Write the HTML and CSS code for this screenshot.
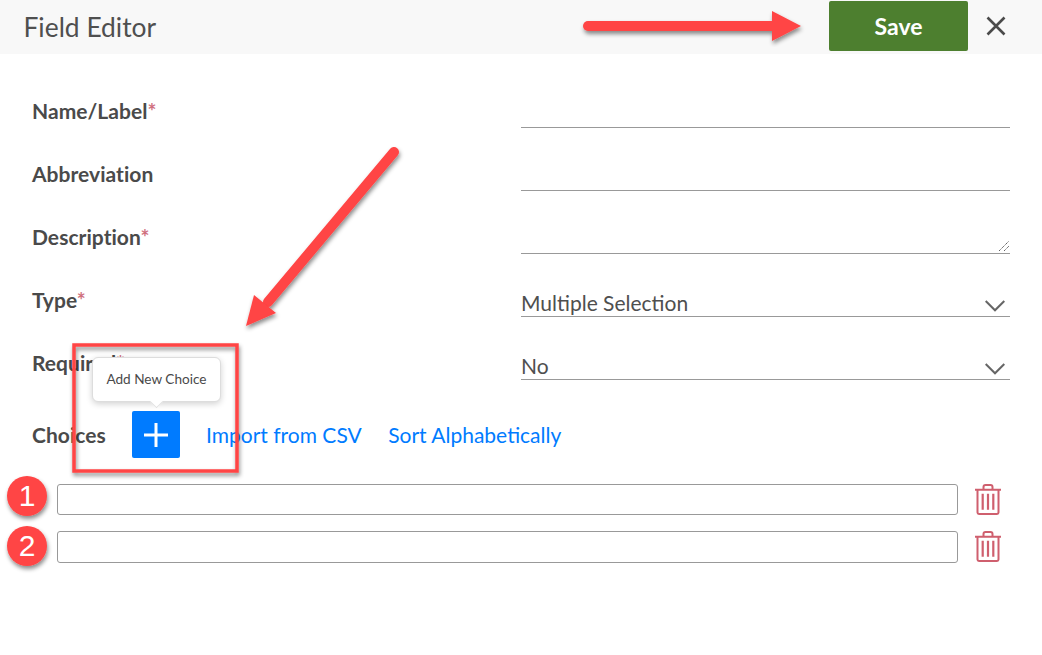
FILE: index.html
```html
<!DOCTYPE html>
<html lang="en">
<head>
<meta charset="utf-8">
<title>Field Editor</title>
<link rel="stylesheet" href="styles.css">
</head>
<body>
<div class="page">
  <header class="header">
    <h1 class="title">Field Editor</h1>
    <button class="save" type="button">Save</button>
    <button class="close" type="button" aria-label="Close">
      <svg width="20" height="20" viewBox="0 0 20 20"><path d="M1.5 1.5 18.500 18.500M18.500 1.500 1.500 18.500" fill="none" stroke="#4a4a4a" stroke-width="2.600"/></svg>
    </button>
  </header>
  <main class="form">
    <div class="row"><label class="label">Name/Label<span class="req">*</span></label><div class="field"></div></div>
    <div class="row"><label class="label">Abbreviation</label><div class="field"></div></div>
    <div class="row"><label class="label">Description<span class="req">*</span></label>
      <div class="field">
        <svg class="grip" width="10" height="10" viewBox="0 0 10 10"><path d="M0 10 10 0M5 10 10 5" fill="none" stroke="#555" stroke-width="1" stroke-dasharray="1.300 .7"/></svg>
      </div>
    </div>
    <div class="row"><label class="label">Type<span class="req">*</span></label>
      <div class="field select"><span>Multiple Selection</span>
        <svg class="chev" width="20" height="12" viewBox="0 0 20 12"><path d="M.7 1 10 10.300 19.300 1" fill="none" stroke="#666" stroke-width="2"/></svg>
      </div>
    </div>
    <div class="row"><label class="label">Required<span class="req">*</span></label>
      <div class="field select"><span>No</span>
        <svg class="chev" width="20" height="12" viewBox="0 0 20 12"><path d="M.7 1 10 10.300 19.300 1" fill="none" stroke="#666" stroke-width="2"/></svg>
      </div>
    </div>
    <div class="choices-bar">
      <span class="label choices-label">Choices</span>
      <button class="add" type="button" aria-label="Add New Choice">
        <svg width="24" height="24" viewBox="0 0 24 24"><path d="M12 0V24M0 12H24" stroke="#fff" stroke-width="3"/></svg>
      </button>
      <a class="link" href="#">Import from CSV</a>
      <a class="link" href="#">Sort Alphabetically</a>
    </div>
    <div class="choice">
      <div class="choice-input"></div>
      <svg class="trash" width="28" height="31" viewBox="0 0 28 32" preserveAspectRatio="none" fill="none" stroke="#cf5f6e" stroke-width="2"><path d="M1 6H27M3.500 6V29.500Q3.500 31 5 31H23Q24.500 31 24.500 29.500V6M9.500 5.500V3Q9.500 1 11.500 1H16.500Q18.500 1 18.500 3V5.500"/><path d="M8.700 10V26.500M14 10V26.500M19.300 10V26.500" stroke-width="2.200"/></svg>
    </div>
    <div class="choice">
      <div class="choice-input choice-input-tall"></div>
      <svg class="trash" width="28" height="31" viewBox="0 0 28 32" preserveAspectRatio="none" fill="none" stroke="#cf5f6e" stroke-width="2"><path d="M1 6H27M3.500 6V29.500Q3.500 31 5 31H23Q24.500 31 24.500 29.500V6M9.500 5.500V3Q9.500 1 11.500 1H16.500Q18.500 1 18.500 3V5.500"/><path d="M8.700 10V26.500M14 10V26.500M19.300 10V26.500" stroke-width="2.200"/></svg>
    </div>
  </main>

  <div class="tooltip">Add New Choice</div>

  <svg class="annot" width="1042" height="655" viewBox="0 0 1042 655">
    <defs>
      <filter id="sh" x="-20%" y="-20%" width="140%" height="140%">
        <feDropShadow dx="1" dy="3" stdDeviation="2.200" flood-color="#000" flood-opacity=".45"/>
      </filter>
    </defs>
    <g filter="url(#sh)">
      <path d="M588 26H772" stroke="#ff4444" stroke-width="10" stroke-linecap="round" fill="none"/>
      <path d="M772 11 801 26 772 41Z" fill="#ff4444"/>
    </g>
    <g filter="url(#sh)">
      <path d="M394 152 268 302" stroke="#ff4444" stroke-width="10" stroke-linecap="round" fill="none"/>
      <path d="M254 295 246 326 276 313Z" fill="#ff4444"/>
    </g>
    <rect x="74" y="345" width="163" height="126" fill="none" stroke="#ff4444" stroke-width="3.500" filter="url(#sh)"/>
    <g filter="url(#sh)">
      <circle cx="27" cy="496" r="20" fill="#ff4444"/>
      <circle cx="27" cy="546" r="20" fill="#ff4444"/>
    </g>
  </svg>
  <span class="badge badge-one">1</span>
  <span class="badge badge-two">2</span>
</div>
</body>
</html>
```
FILE: styles.css
```css
* { box-sizing: border-box; }
html, body { margin: 0; padding: 0; background: #fff; }
body { font-family: Lato, "Liberation Sans", sans-serif; color: #4a4a4a; }
.page { position: relative; width: 1042px; height: 655px; overflow: hidden; }

.header { height: 54px; background: #f8f8f8; display: flex; align-items: center; padding: 0 36px 0 23.500px; }
.title { margin: 0; font-size: 26.400px; font-weight: 400; color: #4f4f4f; flex: 1; }
.save { width: 139px; height: 50px; margin-top: -2px; margin-right: 18px; border: 0; border-radius: 2px; background: #4d7f2f; color: #fff; font: 700 23px Lato, sans-serif; }
.close { padding: 0; border: 0; background: none; width: 20px; height: 20px; margin-top: -3px; display: block; }
.close svg { display: block; }

.form { padding: 11px 32px 0 32px; }
.row { height: 63px; display: flex; justify-content: space-between; }
.label { font-size: 21px; font-weight: 700; color: #4a4a4a; line-height: 24px; display: block; letter-spacing: .04px; }
.row .label { padding-top: 34px; }
.req { color: #d0707e; font-weight: 700; }
.field { width: 489px; height: 63px; border-bottom: 1px solid #999; position: relative; }
.select { display: flex; align-items: flex-end; justify-content: space-between; font-size: 21px; color: #4f4f4f; line-height: 24px; padding-bottom: 1px; }
.chev { margin: 0 5px 3px 0; }
.grip { position: absolute; right: 1px; bottom: 2px; }

.choices-bar { height: 47px; margin-top: 31px; display: flex; align-items: center; }
.choices-label { width: 100px; }
.add { width: 48px; height: 47px; padding: 0; border: 0; border-radius: 2px; background: #007bff; display: flex; align-items: center; justify-content: center; margin-right: 26px; }
.link { color: #007bff; font-size: 21px; text-decoration: none; margin-right: 26.500px; }

.choice { display: flex; align-items: flex-start; height: 32px; margin-left: 25px; margin-bottom: 15px; }
.choices-bar + .choice { margin-top: 26px; }
.choice-input { width: 901px; height: 31px; border: 1px solid #999; border-radius: 3px; background: #fff; }
.choice-input-tall { height: 32px; }
.trash { margin-left: 16px; }

.tooltip { position: absolute; left: 92px; top: 357px; width: 129px; height: 45px; padding-bottom: 2px; background: #fff; border: 1px solid #ddd; border-radius: 6px; box-shadow: 0 2px 6px rgba(0,0,0,.18); font-size: 13.600px; color: #4a4a4a; display: flex; align-items: center; justify-content: center; }
.tooltip::after { content: ""; position: absolute; left: 57px; bottom: -7px; width: 12px; height: 12px; background: #fff; border-right: 1px solid #ddd; border-bottom: 1px solid #ddd; transform: rotate(45deg) scale(.72); }

.annot { position: absolute; left: 0; top: 0; pointer-events: none; }
.badge { position: absolute; left: 7px; width: 40px; text-align: center; font: 400 30px/40px "Liberation Sans", Arial, sans-serif; color: #fff; }
.badge-one { top: 476px; }
.badge-two { top: 526px; }
```
